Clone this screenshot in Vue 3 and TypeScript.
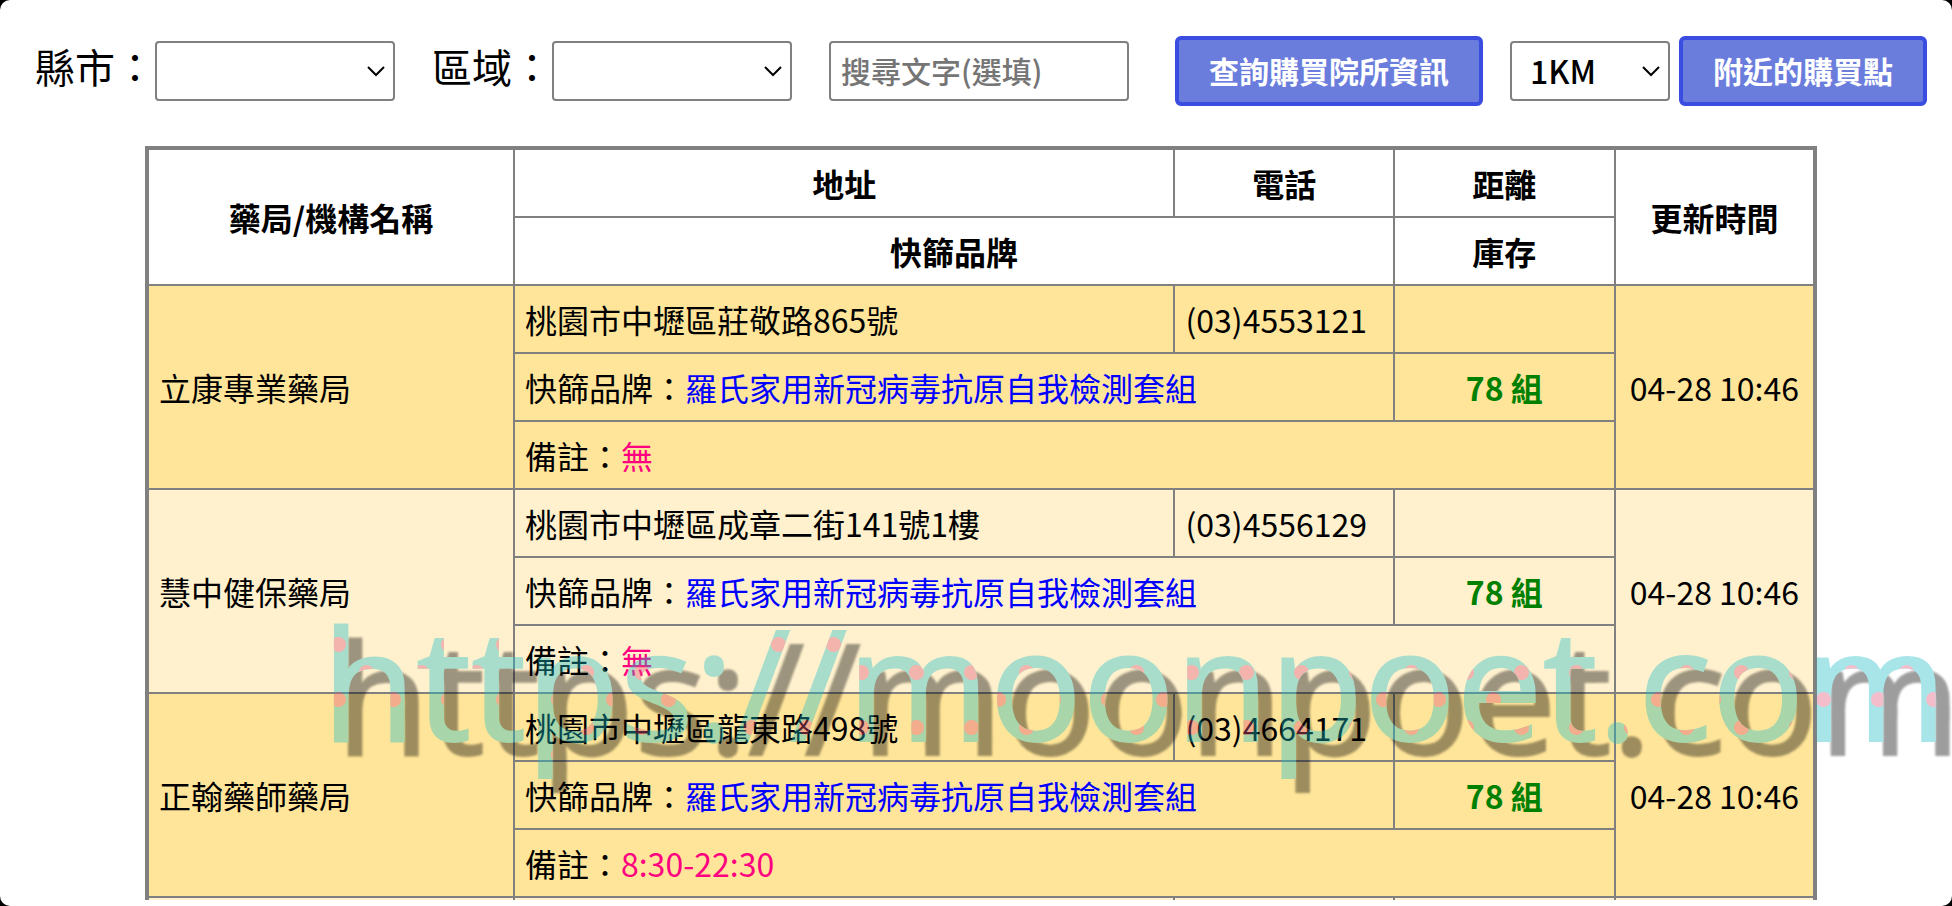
<script setup lang="ts">
import { ref } from 'vue'

interface Shop {
  name: string
  address: string
  phone: string
  distance: string
  brand: string
  stock: number
  note: string
  updated: string
}

const brand = '羅氏家用新冠病毒抗原自我檢測套組'

const shops: Shop[] = [
  { name: '立康專業藥局', address: '桃園市中壢區莊敬路865號', phone: '(03)4553121', distance: '', brand, stock: 78, note: '無', updated: '04-28 10:46' },
  { name: '慧中健保藥局', address: '桃園市中壢區成章二街141號1樓', phone: '(03)4556129', distance: '', brand, stock: 78, note: '無', updated: '04-28 10:46' },
  { name: '正翰藥師藥局', address: '桃園市中壢區龍東路498號', phone: '(03)4664171', distance: '', brand, stock: 78, note: '8:30-22:30', updated: '04-28 10:46' },
  { name: '', address: '', phone: '', distance: '', brand: '', stock: 0, note: '', updated: '' },
]

const city = ref('')
const area = ref('')
const keyword = ref('')
const radius = ref('1KM')
</script>

<template>
  <main class="page">
    <form class="toolbar" @submit.prevent>
      <label class="label" for="city">縣市：</label>
      <span class="picker">
        <select id="city" v-model="city"><option value=""></option></select>
        <svg class="arrow" viewBox="0 0 18 11" aria-hidden="true"><path d="M1 1 L9 9 L17 1" /></svg>
      </span>
      <label class="label spaced" for="area">區域：</label>
      <span class="picker">
        <select id="area" v-model="area"><option value=""></option></select>
        <svg class="arrow" viewBox="0 0 18 11" aria-hidden="true"><path d="M1 1 L9 9 L17 1" /></svg>
      </span>
      <input v-model="keyword" class="keyword spaced" type="text" placeholder="搜尋文字(選填)" aria-label="搜尋文字" />
      <button class="search" type="submit">查詢購買院所資訊</button>
      <span class="picker small">
        <select v-model="radius" aria-label="距離"><option>1KM</option></select>
        <svg class="arrow" viewBox="0 0 18 11" aria-hidden="true"><path d="M1 1 L9 9 L17 1" /></svg>
      </span>
      <button class="nearby" type="button">附近的購買點</button>
    </form>

    <div class="results">
      <table>
        <colgroup>
          <col class="c-name" /><col class="c-address" /><col class="c-phone" /><col class="c-stock" /><col class="c-time" />
        </colgroup>
        <thead>
          <tr>
            <th rowspan="2">藥局/機構名稱</th>
            <th>地址</th>
            <th>電話</th>
            <th>距離</th>
            <th rowspan="2">更新時間</th>
          </tr>
          <tr>
            <th colspan="2">快篩品牌</th>
            <th>庫存</th>
          </tr>
        </thead>
        <tbody v-for="(shop, i) in shops" :key="i">
          <tr>
            <td rowspan="3">{{ shop.name }}</td>
            <td>{{ shop.address }}</td>
            <td>{{ shop.phone }}</td>
            <td>{{ shop.distance }}</td>
            <td rowspan="3" class="time">{{ shop.updated }}</td>
          </tr>
          <tr>
            <td colspan="2"><template v-if="shop.brand">快篩品牌：<span class="brand">{{ shop.brand }}</span></template></td>
            <td class="stock"><template v-if="shop.stock">{{ shop.stock }} 組</template></td>
          </tr>
          <tr>
            <td colspan="3"><template v-if="shop.note">備註：<span class="note">{{ shop.note }}</span></template></td>
          </tr>
        </tbody>
      </table>
    </div>

    <div class="watermark">https://moonpoet.com</div>
  </main>
</template>

<style>
html,
body {
  background: #000;
}
</style>

<style scoped>
.page {
  position: relative;
  box-sizing: border-box;
  display: flex;
  flex-direction: column;
  gap: 40px;
  height: 100vh;
  padding: 36px 0 6px 10px;
  overflow: hidden;
  border-radius: 10px;
  background: #fff;
  color: #000;
  font-family: "Noto Sans CJK TC", sans-serif;
  font-size: 32px;
}

.toolbar {
  display: flex;
  flex: none;
  align-items: center;
  justify-content: center;
}

.label {
  padding-bottom: 10px;
  font-size: 40px;
  line-height: 58px;
  white-space: nowrap;
}

.spaced {
  margin-left: 37px;
}

.picker {
  position: relative;
  flex: none;
  width: 240px;
}

.picker.small {
  width: 160px;
  margin: 0 9px 0 27px;
}

select,
.keyword {
  display: block;
  box-sizing: border-box;
  width: 100%;
  height: 60px;
  border: 2px solid #808080;
  border-radius: 4px;
  background: #fff;
  color: #000;
  font-family: inherit;
  font-size: 32px;
}

select {
  appearance: none;
  padding: 0 30px 2px 18px;
  font-weight: 500;
}

.keyword {
  width: 300px;
  padding: 0 10px 2px;
  font-size: 30px;
  font-weight: 500;
}

.keyword::placeholder {
  color: #757575;
  opacity: 1;
}

.arrow {
  position: absolute;
  top: 25px;
  right: 10px;
  width: 18px;
  height: 11px;
  fill: none;
  stroke: #000;
  stroke-width: 2;
  pointer-events: none;
}

button {
  flex: none;
  box-sizing: border-box;
  height: 70px;
  padding: 0 30px 2px;
  border: 4px solid #3a4de0;
  border-radius: 6px;
  background: #6a7ddd;
  color: #fff;
  font-family: inherit;
  font-size: 30px;
  font-weight: 700;
  white-space: nowrap;
}

.search {
  margin-left: 46px;
}

.results {
  flex: 1;
  min-height: 0;
  margin: 0 135px;
  overflow: hidden;
}

table {
  width: 100%;
  table-layout: fixed;
  border: 4px solid #808080;
  border-collapse: collapse;
  line-height: 46px;
}

.c-name { width: 22%; }
.c-address { width: 39.6%; }
.c-phone { width: 13.15%; }
.c-stock { width: 13.25%; }
.c-time { width: 12%; }

th,
td {
  height: 46px;
  padding: 10px;
  border: 2px solid #808080;
}

tbody td {
  background: #fff1ce;
}

tbody:nth-of-type(odd) td {
  background: #ffe599;
}

.time {
  padding: 10px 0;
  text-align: center;
}

.brand {
  color: #00f;
}

.note {
  color: #ff0080;
}

.stock {
  color: #008000;
  font-weight: 700;
  text-align: center;
}

.watermark {
  position: absolute;
  right: 5px;
  bottom: 120px;
  color: transparent;
  font-family: "Open Sans", sans-serif;
  font-size: 154px;
  line-height: 210px;
  white-space: nowrap;
  pointer-events: none;
  opacity: 0.38;
  background:
    radial-gradient(circle at 50% 50%, #e0547c 7px, transparent 8px) 44px 41px / 55px 55px,
    radial-gradient(circle at 50% 50%, #e0547c 7px, transparent 8px) 17px 14px / 55px 55px,
    #1cbdc8;
  background-clip: text;
  -webkit-text-stroke: 2px transparent;
  filter: drop-shadow(14px 14px 1px #000);
}
</style>
